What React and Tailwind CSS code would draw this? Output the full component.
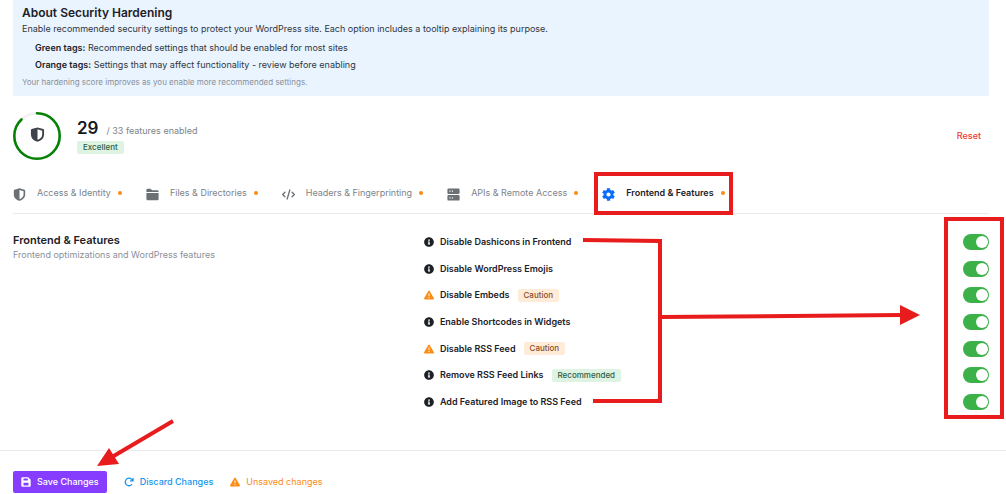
import { useState } from 'react';
import { FaInfoCircle } from 'react-icons/fa';
import { FaArrowRotateRight, FaCode, FaTriangleExclamation } from 'react-icons/fa6';

function ShieldIcon({ className }) {
  return (
    <svg viewBox="0 0 16 16" className={className} fill="currentColor" fillRule="evenodd" aria-hidden="true">
      <path d="M8 .4 14.2 2.2Q15 2.5 15 3.3V8c0 4-3 6.7-7 7.8C4 14.7 1 12 1 8V3.3Q1 2.5 1.8 2.2ZM8 2.5V13.7C11 12.7 13 10.8 13 8V4Z" />
    </svg>
  );
}

function FolderIcon({ className }) {
  return (
    <svg viewBox="0 0 16 16" className={className} fill="currentColor" aria-hidden="true">
      <path d="M.5 4.8V2.5Q.5 1 2 1H5.5L7.5 2.8H14Q15.5 2.8 15.5 4.3V4.8Z" />
      <path d="M.5 6H15.5V13.5Q15.5 15 14 15H2Q.5 15 .5 13.5Z" />
    </svg>
  );
}

function ServerIcon({ className }) {
  return (
    <svg viewBox="0 0 16 16" className={className} fill="currentColor" fillRule="evenodd" aria-hidden="true">
      <path d="M2 .5H14Q15.5 .5 15.5 2V5.8Q15.5 7.3 14 7.3H2Q.5 7.3 .5 5.8V2Q.5 .5 2 .5ZM3 3.2V4.6H4.4V3.2ZM6 3.2V4.6H7.4V3.2Z" />
      <path d="M2 8.7H14Q15.5 8.7 15.5 10.2V14Q15.5 15.5 14 15.5H2Q.5 15.5 .5 14V10.2Q.5 8.7 2 8.7ZM3 11.4V12.8H4.4V11.4ZM6 11.4V12.8H7.4V11.4Z" />
    </svg>
  );
}

function GearIcon({ className }) {
  return (
    <svg viewBox="0 0 16 16" className={className} fill="none" stroke="currentColor" aria-hidden="true">
      <circle cx="8" cy="8" r="4.3" strokeWidth="3.4" />
      <path
        d="M8 .2V3M8 13V15.8M1.25 4.1 3.7 5.5M12.3 10.5 14.75 11.9M1.25 11.9 3.7 10.5M12.3 5.5 14.75 4.1"
        strokeWidth="4"
      />
    </svg>
  );
}

function SaveIcon({ className }) {
  return (
    <svg viewBox="0 0 16 16" className={className} fill="currentColor" fillRule="evenodd" aria-hidden="true">
      <path d="M2 .5H11.5L15.5 4.5V14Q15.5 15.5 14 15.5H2Q.5 15.5 .5 14V2Q.5 .5 2 .5ZM4 2.5V5.5H11V2.5ZM4 9V13.5H12V9Z" />
    </svg>
  );
}

const tabs = [
  { id: 'access', label: 'Access & Identity', icon: ShieldIcon },
  { id: 'files', label: 'Files & Directories', icon: FolderIcon },
  { id: 'headers', label: 'Headers & Fingerprinting', icon: FaCode },
  { id: 'apis', label: 'APIs & Remote Access', icon: ServerIcon },
  { id: 'frontend', label: 'Frontend & Features', icon: GearIcon },
];

const features = [
  { id: 'dashicons', label: 'Disable Dashicons in Frontend' },
  { id: 'emojis', label: 'Disable WordPress Emojis' },
  { id: 'embeds', label: 'Disable Embeds', tag: 'Caution' },
  { id: 'shortcodes', label: 'Enable Shortcodes in Widgets' },
  { id: 'rss', label: 'Disable RSS Feed', tag: 'Caution' },
  { id: 'rss-links', label: 'Remove RSS Feed Links', tag: 'Recommended' },
  { id: 'rss-image', label: 'Add Featured Image to RSS Feed' },
];

function Tag({ children }) {
  const tone = children === 'Caution' ? 'bg-[#ffecd8] text-[#8a4b1f]' : 'bg-[#dff3e2] text-[#2b6148]';
  return <span className={`rounded-xs px-1.5 text-[8px] leading-[13px] font-medium ${tone}`}>{children}</span>;
}

function FeatureRow({ feature }) {
  const [enabled, setEnabled] = useState(true);
  const caution = feature.tag === 'Caution';

  return (
    <li className="flex h-4 items-center">
      {caution ? (
        <FaTriangleExclamation className="size-[10px] text-[#fb8c14]" />
      ) : (
        <FaInfoCircle className="size-[10px] text-[#1d2127]" />
      )}
      <label htmlFor={feature.id} className="ml-1.5 text-[9px] leading-4 font-semibold text-[#1d2127]">
        {feature.label}
      </label>
      {feature.tag && (
        <span className="ml-2 flex">
          <Tag>{feature.tag}</Tag>
        </span>
      )}
      <input
        id={feature.id}
        type="checkbox"
        role="switch"
        checked={enabled}
        onChange={(e) => setEnabled(e.target.checked)}
        className="ml-auto h-4 w-[26px] cursor-pointer appearance-none rounded-full bg-gray-300 p-0.5 before:block before:size-3 before:rounded-full before:bg-white checked:bg-[#3cb14a] checked:pl-[13px]"
      />
    </li>
  );
}

function ScoreRing() {
  return (
    <div className="relative flex size-12 items-center justify-center">
      <svg viewBox="0 0 48 48" className="absolute inset-0 size-12 -rotate-90" fill="none" strokeWidth="2.6">
        <circle cx="24" cy="24" r="22.7" stroke="#f1f1f1" />
        <circle cx="24" cy="24" r="22.7" stroke="#058205" pathLength="100" strokeDasharray="88 100" strokeLinecap="round" />
      </svg>
      <ShieldIcon className="mb-[3px] size-[15px] text-[#3c434a]" />
    </div>
  );
}

function Annotations() {
  return (
    <svg width="1006" height="494" className="pointer-events-none absolute top-0 left-0" fill="none" stroke="#e81c1c">
      <rect x="596" y="174" width="135" height="39" strokeWidth="4" />
      <rect x="946" y="219" width="56" height="198" strokeWidth="4" />
      <path d="M583 240 L660 241 V401 H593" strokeWidth="4" />
      <path d="M660 317 L902 315" strokeWidth="4" />
      <path d="M900 305 L920 315 L900 325 Z" fill="#e81c1c" stroke="none" />
      <path d="M173 421 L112 457" strokeWidth="4" />
      <path d="M97 466 L109 448 L119 464 Z" fill="#e81c1c" stroke="none" />
    </svg>
  );
}

export default function App() {
  const [activeTab, setActiveTab] = useState('frontend');

  return (
    <main className="relative bg-white font-['Inter',sans-serif] text-[#1d2127]">
      <section className="mr-[17px] ml-[13px] rounded-b-xs bg-[#e9f4ff] px-[9px] pt-[5px] pb-2">
        <h2 className="text-[12px] leading-4 font-semibold">About Security Hardening</h2>
        <p className="text-[9px] leading-4 text-[#30363d]">
          Enable recommended security settings to protect your WordPress site. Each option includes a tooltip explaining its purpose.
        </p>
        <ul className="mt-0.5 pl-[13px] text-[9px] leading-[17px] text-[#30363d]">
          <li>
            <strong className="font-semibold text-[#1d2127]">Green tags:</strong> Recommended settings that should be enabled for most sites
          </li>
          <li>
            <strong className="font-semibold text-[#1d2127]">Orange tags:</strong> Settings that may affect functionality - review before enabling
          </li>
        </ul>
        <p className="mt-[3px] text-[8px] leading-3 text-[#8a9099]">Your hardening score improves as you enable more recommended settings.</p>
      </section>

      <section className="mt-4 mr-[17px] ml-[13px] flex h-12 items-center">
        <ScoreRing />
        <div className="ml-4">
          <p className="flex items-baseline text-[9px] leading-5 text-[#7d838a]">
            <span className="mr-2 text-[17px] font-semibold text-[#14171c]">29</span>/ 33 features enabled
          </p>
          <div className="flex">
            <Tag>Excellent</Tag>
          </div>
        </div>
        <button type="button" className="mr-2 ml-auto text-[9px] font-medium text-[#f03a33]">
          Reset
        </button>
      </section>

      <nav role="tablist" className="mt-3 mr-[17px] ml-[13px] flex h-[42px] items-center gap-6 border-b border-[#ebebeb]">
        {tabs.map(({ id, label, icon: Icon }) => {
          const active = id === activeTab;
          return (
            <button
              key={id}
              type="button"
              role="tab"
              aria-selected={active}
              onClick={() => setActiveTab(id)}
              className={`flex items-center text-[9px] leading-4 ${active ? 'font-semibold text-[#1d2127]' : 'text-[#7d838a]'}`}
            >
              <Icon className={`mt-[3px] size-[13px] ${active ? 'text-[#0a6cff]' : 'text-[#6b7075]'}`} />
              <span className="ml-[11px]">{label}</span>
              <span className="ml-[7px] size-1 rounded-full bg-[#fb8c14]" />
            </button>
          );
        })}
      </nav>

      <section className="mr-[17px] ml-[13px] flex pt-5">
        <div className="w-[42%]">
          <h3 className="text-[11px] leading-3 font-semibold">Frontend & Features</h3>
          <p className="mt-0.5 text-[9px] leading-[14px] text-[#8a9099]">Frontend optimizations and WordPress features</p>
        </div>
        <ul className="flex h-[176px] flex-1 flex-col justify-between pl-px">
          {features.map((feature) => (
            <FeatureRow key={feature.id} feature={feature} />
          ))}
        </ul>
      </section>

      <footer className="mt-10 flex items-center border-t border-[#ebebeb] py-5 pl-[13px] text-[9px]">
        <button type="button" className="flex h-[22px] items-center rounded-xs bg-[#873dff] px-2 font-medium text-white">
          <SaveIcon className="mr-1.5 size-[10px]" />
          Save Changes
        </button>
        <button type="button" className="ml-[17px] flex items-center font-medium text-[#1296ee]">
          <FaArrowRotateRight className="mr-1.5 size-[10px]" />
          Discard Changes
        </button>
        <p className="ml-[17px] flex items-center text-[#fb8c14]">
          <FaTriangleExclamation className="mr-1.5 size-[10px]" />
          Unsaved changes
        </p>
      </footer>

      <Annotations />
    </main>
  );
}
